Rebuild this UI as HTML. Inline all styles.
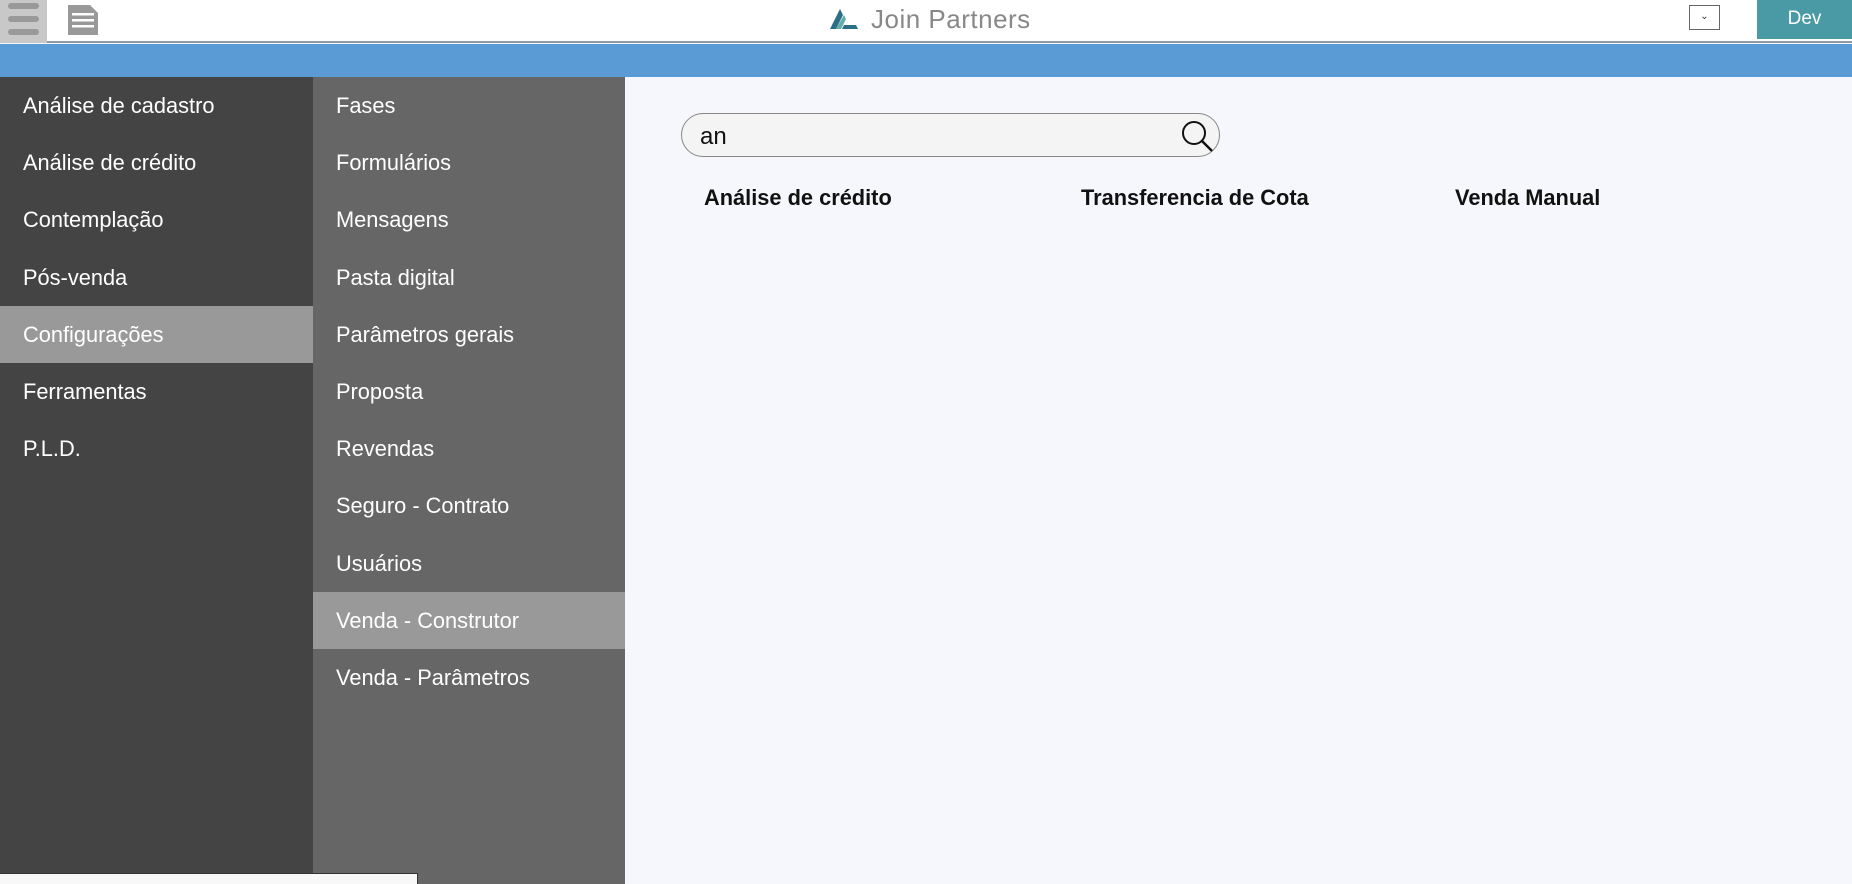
<!DOCTYPE html>
<html><head><meta charset="utf-8"><style>
*{margin:0;padding:0;box-sizing:border-box}
body{width:1852px;height:884px;overflow:hidden;background:#f6f7fc;font-family:"Liberation Sans",Arial,sans-serif;position:relative}
.hdr{position:absolute;left:0;top:0;width:1852px;height:43px;background:#fff;border-bottom:2px solid #8a9aa8}
.ham{position:absolute;left:0;top:0;width:47px;height:43px;background:#c8c8c8}
.ham i{position:absolute;left:8px;width:31px;height:6px;border-radius:3px;background:#999}
.blue{position:absolute;left:0;top:44px;width:1852px;height:33px;background:#5b9bd5}
.c1{position:absolute;left:0;top:77px;width:313px;height:807px;background:#444}
.c2{position:absolute;left:313px;top:77px;width:312px;height:807px;background:#666}
.it{height:57.2px;line-height:57px;color:#fff;font-size:21.8px}
.c1 .it{padding-left:23px}.c2 .it{padding-left:23px}
.sel{background:#999}
.search{position:absolute;left:681px;top:113px;width:539px;height:44px;border:1px solid #888;border-radius:22px;background:#f4f4f4;font-size:24px;line-height:45px;padding-left:18px;color:#111}
.r{position:absolute;top:185px;font-size:21.8px;font-weight:bold;color:#111}
</style></head><body>
<div class="hdr">
<div class="ham"><i style="top:3px"></i><i style="top:16px"></i><i style="top:29px"></i></div>
<svg style="position:absolute;left:67px;top:4px" width="32" height="32" viewBox="0 0 32 32"><path d="M1 1h22l8 8v22H1z" fill="#999"/><rect x="5" y="9" width="22" height="2.5" fill="#fff"/><rect x="5" y="15" width="22" height="2.5" fill="#fff"/><rect x="5" y="21" width="22" height="2.5" fill="#fff"/></svg>
<svg style="position:absolute;left:828px;top:7px" width="32" height="24" viewBox="0 0 32 24"><path d="M2 22L12 2l3 6-7 14z" fill="#2a6f86"/><path d="M8 22L16 8l2 4-5 10z" fill="#6aa"/><path d="M14 22h16l-2-4H16z" fill="#2a6f86"/></svg>
<div style="position:absolute;left:871px;top:4px;font-size:26px;color:#888;letter-spacing:.5px;font-family:'Liberation Sans',sans-serif">Join Partners</div>
<div style="position:absolute;left:1689px;top:5px;width:31px;height:25px;border:1px solid #666;background:#fff;font-size:10px;text-align:center;line-height:22px;color:#333">⌄</div>
<div style="position:absolute;left:1757px;top:0;width:95px;height:39px;background:#4a9aa5;color:#fff;font-size:19px;line-height:38px;text-align:center">Dev</div>
</div>
<div class="blue"></div>
<div class="c1">
<div class="it">Análise de cadastro</div><div class="it">Análise de crédito</div><div class="it">Contemplação</div><div class="it">Pós-venda</div><div class="it sel">Configurações</div><div class="it">Ferramentas</div><div class="it">P.L.D.</div>
</div>
<div class="c2">
<div class="it">Fases</div><div class="it">Formulários</div><div class="it">Mensagens</div><div class="it">Pasta digital</div><div class="it">Parâmetros gerais</div><div class="it">Proposta</div><div class="it">Revendas</div><div class="it">Seguro - Contrato</div><div class="it">Usuários</div><div class="it sel">Venda - Construtor</div><div class="it">Venda - Parâmetros</div>
</div>
<div class="search">an
<svg style="position:absolute;right:4px;top:4px" width="36" height="36" viewBox="0 0 36 36"><circle cx="15" cy="15" r="11" fill="none" stroke="#111" stroke-width="2"/><path d="M23 23l10 10" stroke="#111" stroke-width="2.5"/></svg></div>
<div class="r" style="left:704px">Análise de crédito</div>
<div class="r" style="left:1081px">Transferencia de Cota</div>
<div class="r" style="left:1455px">Venda Manual</div>
<div style="position:absolute;left:0;top:873px;width:418px;height:11px;background:#f8f8f8;border-top:1px solid #333;border-right:1px solid #333"></div>
</body></html>
